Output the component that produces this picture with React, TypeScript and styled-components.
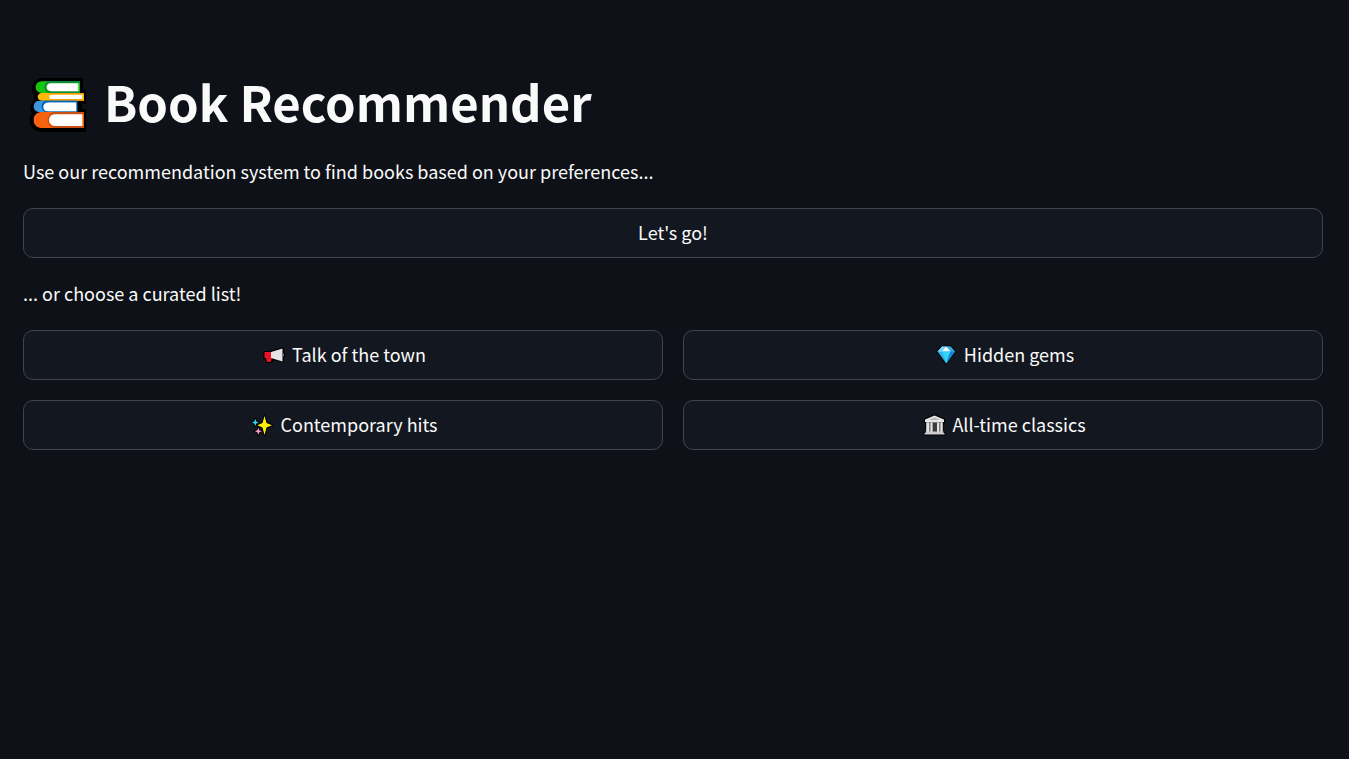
import React from "react";
import styled, { createGlobalStyle } from "styled-components";

const GlobalStyle = createGlobalStyle`
  *, *::before, *::after { box-sizing: border-box; }
  html { background: #0e1117; }
  body {
    margin: 0;
    background: #0e1117;
    color: #fafafa;
    font-family: "Noto Sans CJK SC", "Open Sans", sans-serif;
    font-size: 18px;
    line-height: 30px;
  }
`;

const Page = styled.main`
  display: flex;
  flex-direction: column;
  gap: 20px;
  padding: 72px 26px 48px 23px;
`;

const Title = styled.h1`
  display: flex;
  align-items: center;
  gap: 18px;
  margin: 0;
  padding-left: 5px;
  font-size: 49px;
  font-weight: 700;
  line-height: 58px;
`;

const TitleLabel = styled.span`
  padding-bottom: 6px;
`;

const Text = styled.p`
  margin: 0;
  padding-bottom: 2px;
`;

const ListGrid = styled.div`
  display: grid;
  grid-template-columns: repeat(2, minmax(0, 1fr));
  gap: 20px;
`;

const Button = styled.button`
  display: flex;
  align-items: center;
  justify-content: center;
  gap: 6px;
  width: 100%;
  min-height: 50px;
  padding: 4px 15px;
  border: 1px solid #41444c;
  border-radius: 10px;
  background: #131720;
  color: inherit;
  font: inherit;
  cursor: pointer;

  &:hover {
    border-color: #ff4b4b;
    color: #ff4b4b;
  }
`;

const ButtonLabel = styled.span`
  padding-bottom: 2px;
`;

const TitleIcon = styled.svg`
  flex: none;
  width: 58px;
  height: 56px;
`;

const ButtonIcon = styled.svg`
  flex: none;
  width: 24px;
  height: 24px;
  margin-left: 2px;
`;

const BooksIcon = () => (
  <TitleIcon viewBox="0 0 58 56" aria-hidden="true">
    <path
      d="M14 2H55V14H58V28H54V33H58V56H13C6 55 1.500 51 1.500 44C1.500 41 2.500 39 4.500 37C1 33 2 27 6 24V19C2 14 4 3 14 2Z"
      fill="#000"
    />
    <path d="M14 5.300H52V17H14C5.500 17 5.500 5.300 14 5.300Z" fill="#16c60c" />
    <path d="M20 5.300H52V7.300H21C17 8 17 14 21 15.200H52V17H20C15 14.500 15 8 20 5.300Z" fill="#10893e" />
    <path d="M23 7.300H50.300V15.200H23C17.300 15.200 17.300 7.300 23 7.300Z" fill="#fff" />
    <path d="M14 17H56V24.700H14C8.300 24.700 8.300 17 14 17Z" fill="#ffb900" />
    <path d="M22 17H56V18.700H22ZM22 23H56V24.700H22Z" fill="#f5a000" />
    <path d="M23.500 18.700H54.300V23H23.500C20.600 23 20.600 18.700 23.500 18.700Z" fill="#fff" />
    <path d="M11.500 24.700H49.300V36H11.500C3.800 36 3.800 24.700 11.500 24.700Z" fill="#3a96dd" />
    <path d="M17 24.700H49.300V26.400H18C14.500 28 14.500 34 18 35.200H49.300V36H17C12.500 33.500 12.500 27 17 24.700Z" fill="#0063b1" />
    <path d="M20 26.400H48V35.200H20C13.800 35.200 13.800 26.400 20 26.400Z" fill="#fff" />
    <path d="M13.500 36H56V52H13.500C3 52 3 36 13.500 36Z" fill="#f7630c" />
    <path d="M25 36H56V38.300H26C21 40 21 48.500 26 50H56V52H25C18 49.500 18 38.500 25 36Z" fill="#ca5010" />
    <path d="M27 38.300H54.300V50H27C19 50 19 38.300 27 38.300Z" fill="#fff" />
  </TitleIcon>
);

const MegaphoneIcon = () => (
  <ButtonIcon viewBox="0 0 24 24" aria-hidden="true">
    <path
      d="M2 9H8L21 5V10L22.500 11V13L21 14V18.500L12 16L9 19H5L4 15H2Z"
      fill="#000"
      stroke="#000"
      strokeWidth="2"
      strokeLinejoin="round"
    />
    <path d="M2.500 9H9V15H10L8.500 19H5L4 15H2.500Z" fill="#e81224" />
    <path d="M9 9L20.500 5.500V18.500L9 15Z" fill="#e5e5e5" />
    <path d="M21 10.500L22 11V13L21 13.500Z" fill="#767676" />
  </ButtonIcon>
);

const GemIcon = () => (
  <ButtonIcon viewBox="0 0 24 24" aria-hidden="true">
    <path d="M8 3.500H16.500L21 8.500L12.300 20.500L3.500 8.500Z" fill="#000" stroke="#000" strokeWidth="2" strokeLinejoin="round" />
    <path d="M8 3.500H16.500L21 8.500L12.300 20.500L3.500 8.500Z" fill="#28b4ed" />
    <path d="M8 3.500L3.500 8.500H8.500L12.300 3.500Z" fill="#79d9fb" />
    <path d="M16.500 3.500L21 8.500H16L12.300 3.500Z" fill="#3ba9e0" />
    <path d="M12.300 3.500L16.500 8.500H8Z" fill="#fff" />
    <path d="M8 8.500H16.500L12.300 20.500Z" fill="#31d2f7" />
    <path d="M16.500 8.500H21L12.300 20.500Z" fill="#1685cf" />
  </ButtonIcon>
);

const SparklesIcon = () => (
  <ButtonIcon viewBox="0 0 24 24" aria-hidden="true">
    <g stroke="#000" strokeWidth="2" strokeLinejoin="round" paintOrder="stroke">
      <path d="M5.300 5.800L6.300 8.400L8.800 9.400L6.300 10.400L5.300 13L4.300 10.400L1.800 9.400L4.300 8.400Z" fill="#31d2f7" />
      <path d="M8.300 14.700L9.300 17.300L11.800 18.300L9.300 19.300L8.300 21.900L7.300 19.300L4.800 18.300L7.300 17.300Z" fill="#f59ac5" />
      <path d="M14.500 3L16.500 10L22 12.300L16.500 14.600L14.500 22L12.500 14.600L7.300 12.300L12.500 10Z" fill="#fff100" />
    </g>
  </ButtonIcon>
);

const TempleIcon = () => (
  <ButtonIcon viewBox="0 0 24 24" aria-hidden="true">
    <path
      d="M12.500 2.500L22 6.500V9.500L20.500 10V18L22.500 20V21.500H2.500V20L4.500 18V10L3 9.500V6.500Z"
      fill="#000"
      stroke="#000"
      strokeWidth="2"
      strokeLinejoin="round"
    />
    <path d="M4 9H21V19H4Z" fill="#767676" />
    <path d="M10.500 10H15V19H10.500Z" fill="#3b3b3b" />
    <path d="M12.500 2.500L22 6.500V9H3V6.500Z" fill="#e5e5e5" />
    <path d="M12.500 4.500L18 7H7Z" fill="#b5b5b5" />
    <path d="M4.500 9.500H7V19H4.500ZM8.500 9.500H10.500V19H8.500ZM15 9.500H17V19H15ZM18.500 9.500H20.500V19H18.500Z" fill="#e5e5e5" />
    <path d="M3.500 18.500H21.500V20H22.500V21.500H2.500V20H3.500Z" fill="#ccc" />
  </ButtonIcon>
);

const curatedLists = [
  { label: "Talk of the town", Icon: MegaphoneIcon },
  { label: "Hidden gems", Icon: GemIcon },
  { label: "Contemporary hits", Icon: SparklesIcon },
  { label: "All-time classics", Icon: TempleIcon },
];

export default function App() {
  return (
    <>
      <GlobalStyle />
      <Page>
        <Title>
          <BooksIcon />
          <TitleLabel>Book Recommender</TitleLabel>
        </Title>
        <Text>Use our recommendation system to find books based on your preferences...</Text>
        <Button type="button">
          <ButtonLabel>Let's go!</ButtonLabel>
        </Button>
        <Text>... or choose a curated list!</Text>
        <ListGrid>
          {curatedLists.map(({ label, Icon }) => (
            <Button type="button" key={label}>
              <Icon />
              <ButtonLabel>{label}</ButtonLabel>
            </Button>
          ))}
        </ListGrid>
      </Page>
    </>
  );
}
